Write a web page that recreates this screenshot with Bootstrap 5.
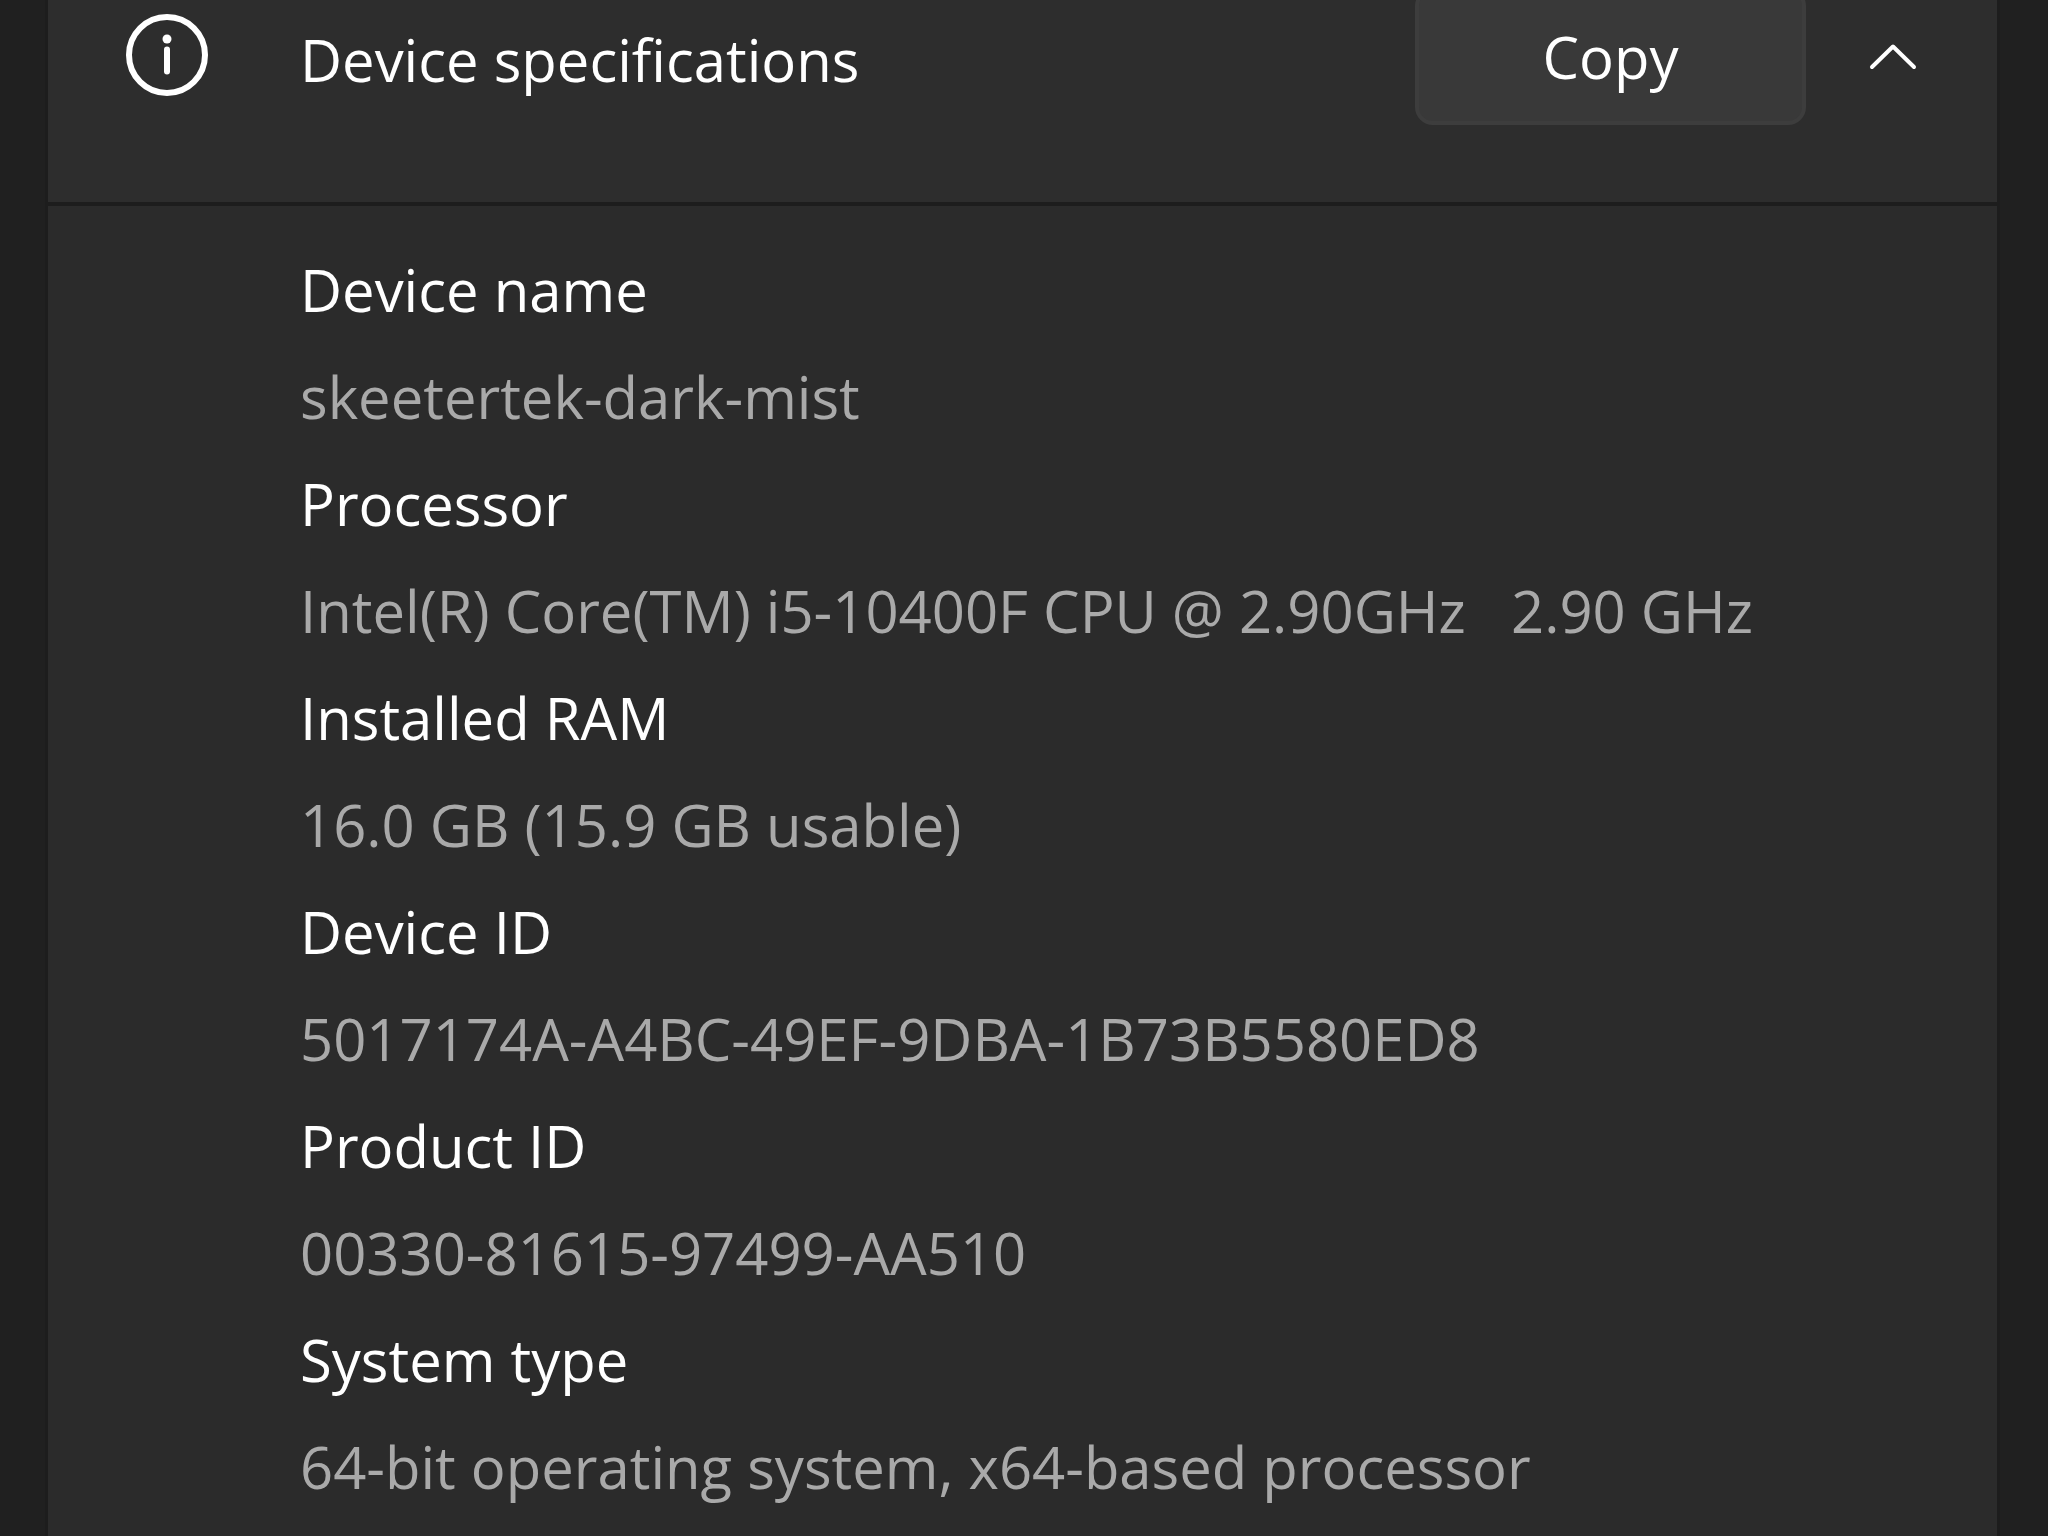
<!DOCTYPE html>
<html lang="en" data-bs-theme="dark">
<head>
<meta charset="utf-8">
<meta name="viewport" content="width=device-width, initial-scale=1">
<title>Device specifications</title>
<link href="https://cdn.jsdelivr.net/npm/bootstrap@5.3.0/dist/css/bootstrap.min.css" rel="stylesheet">
<style>
  body {
    background: #202020;
    color: #fff;
    font-family: "Segoe UI", "Open Sans", "Noto Sans", sans-serif;
    font-size: 58px;
    line-height: 107px;
    overflow: hidden;
  }
  .spec-page { padding: 0 48px 0 45px; }
  /* the panel is scrolled part of the way past the top of the window */
  .spec-panel {
    margin-top: -89px;
    background: #2b2b2b;
    border: solid #1d1d1d;
    border-width: 0 3px;
  }
  .spec-head {
    min-height: 295px;
    padding: 0 79px 0 78px;
    background: #2d2d2d;
    border-bottom: 4px solid #1d1d1d;
  }
  .spec-icon { width: 82px; height: 82px; margin: 0 92px 4px 0; }
  .spec-title { padding-top: 6px; font-size: 58px; font-weight: 400; line-height: 80px; }
  .btn-copy {
    width: 391px;
    height: 137px;
    padding: 0;
    font-size: 58px;
    line-height: 80px;
    color: #fff;
    background: #393939;
    border: 4px solid #3d3d3d;
    border-radius: 18px;
  }
  .btn-fold { margin-left: 62px; padding: 0; line-height: 1; color: #fff; border: 0; }
  .btn-fold svg { width: 50px; height: 30px; }
  .spec-list { padding: 30px 80px 40px 252px; }
  .spec-list dt { font-weight: 400; }
  .spec-list dd { color: #a9a9a9; white-space: pre-wrap; }
</style>
</head>
<body>
<main class="spec-page">
  <section class="spec-panel">
    <header class="spec-head d-flex align-items-center">
      <svg class="spec-icon flex-shrink-0" viewBox="0 0 82 82" fill="none" aria-hidden="true">
        <circle cx="41" cy="41" r="38" stroke="#fff" stroke-width="6"/>
        <circle cx="41" cy="25" r="4.500" fill="#fff"/>
        <path d="M41 35.500V57.500" stroke="#fff" stroke-width="6" stroke-linecap="round"/>
      </svg>
      <h1 class="spec-title flex-grow-1 mb-0">Device specifications</h1>
      <button type="button" class="btn btn-copy">Copy</button>
      <button type="button" class="btn btn-fold" data-bs-toggle="collapse" data-bs-target="#specs" aria-expanded="true" aria-controls="specs" aria-label="Collapse device specifications">
        <svg class="d-block" viewBox="0 0 50 30" fill="none" stroke="#fff" stroke-width="4" stroke-linecap="round" stroke-linejoin="round"><path d="M4 25 25 4.500 46 25"/></svg>
      </button>
    </header>
    <div id="specs" class="collapse show">
      <dl class="spec-list mb-0">
        <dt>Device name</dt>
        <dd class="mb-0">skeetertek-dark-mist</dd>
        <dt>Processor</dt>
        <dd class="mb-0">Intel(R) Core(TM) i5-10400F CPU @ 2.90GHz   2.90 GHz</dd>
        <dt>Installed RAM</dt>
        <dd class="mb-0">16.0 GB (15.9 GB usable)</dd>
        <dt>Device ID</dt>
        <dd class="mb-0">5017174A-A4BC-49EF-9DBA-1B73B5580ED8</dd>
        <dt>Product ID</dt>
        <dd class="mb-0">00330-81615-97499-AA510</dd>
        <dt>System type</dt>
        <dd class="mb-0">64-bit operating system, x64-based processor</dd>
      </dl>
    </div>
  </section>
</main>
<script src="https://cdn.jsdelivr.net/npm/bootstrap@5.3.0/dist/js/bootstrap.bundle.min.js"></script>
</body>
</html>
